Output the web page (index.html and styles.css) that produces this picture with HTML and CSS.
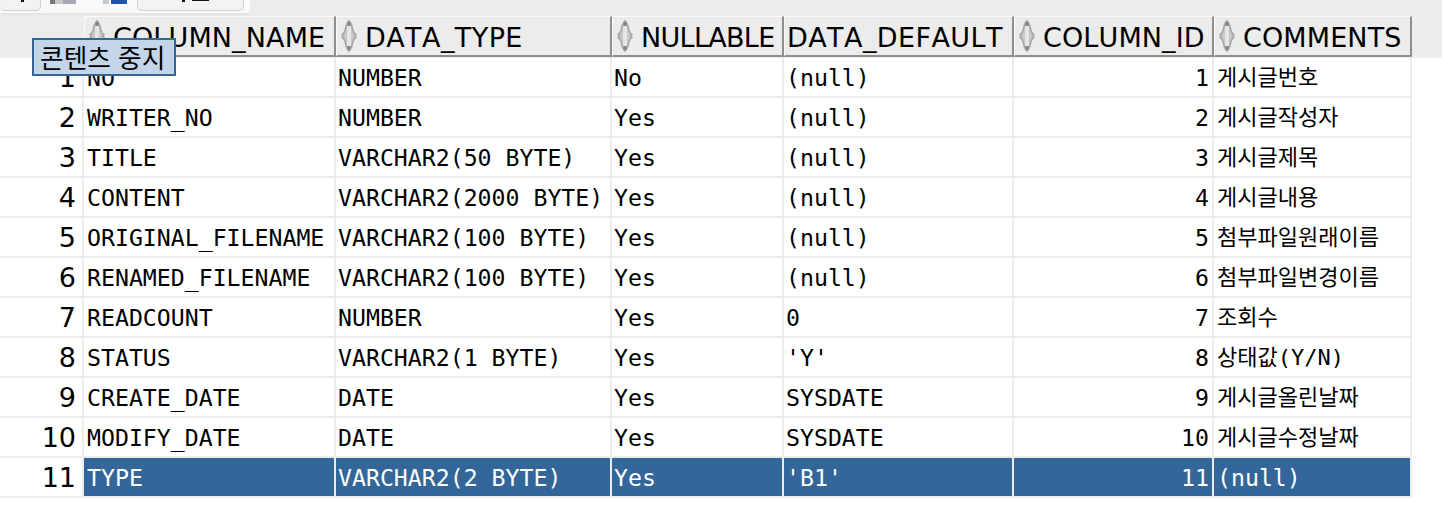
FILE: index.html
```html
<!DOCTYPE html>
<html lang="ko">
<head>
<meta charset="utf-8">
<title>Columns</title>
<link rel="stylesheet" href="styles.css">
</head>
<body>
<svg class="defs" width="0" height="0" aria-hidden="true">
  <defs>
    <symbol id="sort" viewBox="0 0 16 32">
      <path d="M8 .7 C9.8 3 11.5 6 11.5 9 L12.8 12.5 L15 14.6 L13.4 16 L15 17.4 L12.8 19.5 L11.5 23 C11.5 26 9.8 29 8 31.3 C6.2 29 4.5 26 4.5 23 L3.2 19.5 L1 17.4 L2.6 16 L1 14.6 L3.2 12.5 L4.5 9 C4.5 6 6.2 3 8 .7 Z" fill="#c9c9c9" stroke="#a6a6a6" stroke-width="1.5"/>
      <path d="M8 6 V26" stroke="#e6e6e6" stroke-width="4"/>
      <path d="M8 2 V6 M8 26 V30" stroke="#858585" stroke-width="3"/>
    </symbol>
  </defs>
</svg>
<div class="topbar">
  <div class="toolbar">
    <span class="tb-btn tb-first"><i class="mark m1"></i></span>
    <span class="tb-icon tb-gray"></span>
    <span class="tb-icon tb-blue"></span>
    <span class="tb-btn tb-wide"><i class="mark m2"></i><i class="mark m3"></i></span>
  </div>
</div>
<div class="head">
  <div class="corner"></div>
  <div class="hcell"><svg class="sort"><use href="#sort"/></svg>COLUMN_NAME</div>
  <div class="hcell wide"><svg class="sort"><use href="#sort"/></svg>DATA_TYPE</div>
  <div class="hcell tight"><svg class="sort"><use href="#sort"/></svg>NULLABLE</div>
  <div class="hcell nosort wide">DATA_DEFAULT</div>
  <div class="hcell"><svg class="sort"><use href="#sort"/></svg>COLUMN_ID</div>
  <div class="hcell"><svg class="sort"><use href="#sort"/></svg>COMMENTS</div>
</div>
<div class="rows">
  <div class="num">1</div><div class="c name">NO</div><div class="c">NUMBER</div><div class="c">No</div><div class="c">(null)</div><div class="c id">1</div><div class="c ko">게시글번호</div>
  <div class="num">2</div><div class="c name">WRITER_NO</div><div class="c">NUMBER</div><div class="c">Yes</div><div class="c">(null)</div><div class="c id">2</div><div class="c ko">게시글작성자</div>
  <div class="num">3</div><div class="c name">TITLE</div><div class="c">VARCHAR2(50 BYTE)</div><div class="c">Yes</div><div class="c">(null)</div><div class="c id">3</div><div class="c ko">게시글제목</div>
  <div class="num">4</div><div class="c name">CONTENT</div><div class="c">VARCHAR2(2000 BYTE)</div><div class="c">Yes</div><div class="c">(null)</div><div class="c id">4</div><div class="c ko">게시글내용</div>
  <div class="num">5</div><div class="c name">ORIGINAL_FILENAME</div><div class="c">VARCHAR2(100 BYTE)</div><div class="c">Yes</div><div class="c">(null)</div><div class="c id">5</div><div class="c ko">첨부파일원래이름</div>
  <div class="num">6</div><div class="c name">RENAMED_FILENAME</div><div class="c">VARCHAR2(100 BYTE)</div><div class="c">Yes</div><div class="c">(null)</div><div class="c id">6</div><div class="c ko">첨부파일변경이름</div>
  <div class="num">7</div><div class="c name">READCOUNT</div><div class="c">NUMBER</div><div class="c">Yes</div><div class="c">0</div><div class="c id">7</div><div class="c ko">조회수</div>
  <div class="num">8</div><div class="c name">STATUS</div><div class="c">VARCHAR2(1 BYTE)</div><div class="c">Yes</div><div class="c">'Y'</div><div class="c id">8</div><div class="c ko">상태값(Y/N)</div>
  <div class="num">9</div><div class="c name">CREATE_DATE</div><div class="c">DATE</div><div class="c">Yes</div><div class="c">SYSDATE</div><div class="c id">9</div><div class="c ko">게시글올린날짜</div>
  <div class="num">10</div><div class="c name">MODIFY_DATE</div><div class="c">DATE</div><div class="c">Yes</div><div class="c">SYSDATE</div><div class="c id">10</div><div class="c ko">게시글수정날짜</div>
  <div class="num">11</div><div class="c name sel">TYPE</div><div class="c sel">VARCHAR2(2 BYTE)</div><div class="c sel">Yes</div><div class="c sel">'B1'</div><div class="c sel id">11</div><div class="c name sel">(null)</div>
</div>
<div class="tip">콘텐츠 중지</div>
</body>
</html>
```

FILE: styles.css
```css
* { box-sizing: border-box; }
html, body { margin: 0; padding: 0; }
body {
  width: 1442px;
  height: 520px;
  overflow: hidden;
  background: #fff;
  position: relative;
  font-family: "DejaVu Sans Mono", monospace;
  color: #000;
}
.defs { position: absolute; }

.topbar {
  height: 16px;
  background: #ececec;
}
.toolbar {
  width: 250px;
  height: 15px;
  background: #fafafa;
  border-bottom: 2px solid #e4e4e4;
  position: relative;
  display: flex;
  align-items: flex-start;
}
.tb-btn {
  display: flex;
  justify-content: center;
  height: 11px;
  background: #f3f3f3;
  border: 1px solid #cfcfcf;
  border-top: 0;
  border-radius: 0 0 5px 5px;
}
.tb-first { width: 41px; border-left: 0; margin-right: 9px; justify-content: flex-end; padding-right: 16px; }
.tb-icon { height: 4px; }
.tb-gray { width: 26px; margin-right: 27px; background: linear-gradient(90deg, #777 0 18%, #c8c8c8 18% 50%, #a8a8b4 50%); }
.tb-blue { width: 24px; margin-right: 10px; background: linear-gradient(90deg, #c4c8d0 0 25%, #fff 25% 33%, #1f54ad 33%); }
.tb-wide { width: 107px; padding-left: 44px; justify-content: flex-start; gap: 7px; }
.mark { display: block; background: #111; height: 2px; }
.m1 { width: 3px; }
.m2 { width: 3px; }
.m3 { width: 17px; height: 1px; }

.head {
  display: grid;
  grid-template-columns: 84px 252px 276px 172px 230px 200px 198px;
  height: 42px;
  background: #ececec;
}
.hcell {
  display: flex;
  align-items: center;
  height: 41px;
  padding: 2px 0 0 4px;
  white-space: nowrap;
  overflow: hidden;
  font-family: "DejaVu Sans", sans-serif;
  font-size: 27px;
  letter-spacing: 0.12px;
  font-kerning: none;
  background: #ececec;
  border-top: 1px solid #fbfbfb;
  border-left: 1px solid #fbfbfb;
  border-right: 2px solid #8e8e8e;
  border-bottom: 2px solid #8e8e8e;
}
.wide { letter-spacing: 0.42px; }
.tight { letter-spacing: -0.7px; }
.nosort { padding-left: 2px; }
.sort {
  width: 16px;
  height: 32px;
  flex: none;
  margin: -2px 8px 0 0;
}

.rows {
  display: grid;
  grid-template-columns: 82px 250px 274px 170px 228px 198px 196px;
  grid-auto-rows: 38px;
  gap: 2px;
  width: 1412px;
  padding: 0 2px 2px 0;
  background: #ececec;
}
.num {
  background: #fff;
  text-align: right;
  padding-right: 6px;
  font-family: "DejaVu Sans", sans-serif;
  font-size: 27px;
  line-height: 40px;
}
.c {
  background: #fff;
  padding: 0 3px 0 2px;
  font-size: 23.2px;
  line-height: 40px;
  white-space: nowrap;
  overflow: hidden;
}
.name { padding-left: 3px; }
.id { text-align: right; }
.ko {
  font-family: "DejaVu Sans Mono", "Noto Sans CJK KR", sans-serif;
  font-size: 22px;
  padding-left: 3px;
}
.sel {
  background: #336699;
  color: #fff;
}
.tip {
  position: absolute;
  left: 32px;
  top: 38px;
  width: 144px;
  height: 38px;
  padding-left: 6px;
  background: #c3d5e9;
  border: 2px solid #336699;
  font-family: "Noto Sans CJK KR", sans-serif;
  font-size: 25.7px;
  line-height: 33px;
  white-space: nowrap;
}
```
